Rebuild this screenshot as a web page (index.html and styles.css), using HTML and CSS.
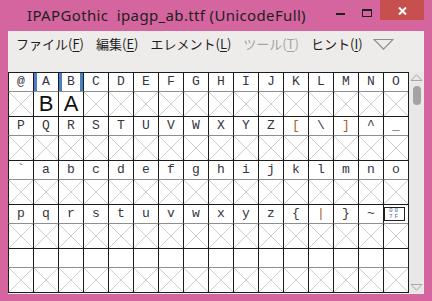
FILE: index.html
```html
<!DOCTYPE html>
<html lang="ja">
<head>
    <meta charset="UTF-8">
    <title>IPAPGothic  ipagp_ab.ttf (UnicodeFull)</title>
    <link rel="stylesheet" href="styles.css">
</head>
<body>
    <div class="window">
        <div class="titlebar">
            <span class="title">IPAPGothic  ipagp_ab.ttf (UnicodeFull)</span>
            <div class="controls">
                <span class="ctl ctl-min"><i class="min-bar"></i></span>
                <span class="ctl ctl-max"><i class="max-box"></i></span>
                <span class="ctl ctl-close">
                    <svg width="9" height="8" viewBox="0 0 9 8"><path d="M1 0.5 L8 7.5 M8 0.5 L1 7.5" stroke="#fff" stroke-width="2"/></svg>
                </span>
            </div>
        </div>

        <div class="client">
            <div class="menubar">
                <span class="menu">ファイル(<u>F</u>)</span>
                <span class="menu">編集(<u>E</u>)</span>
                <span class="menu">エレメント(<u>L</u>)</span>
                <span class="menu disabled">ツール(<u>T</u>)</span>
                <span class="menu">ヒント(<u>I</u>)</span>
                <svg class="menu-more" width="21" height="11" viewBox="0 0 21 11"><path d="M1 0.5 L20 0.5 L10.5 10.2 Z" fill="none" stroke="#8d8d8d" stroke-width="1.2"/></svg>
            </div>

            <div class="sheet">
                <div class="glyph-grid">
                    <!-- row 0x40 -->
                    <div class="label">@</div><div class="label sel-l">A</div><div class="label sel-l sel-r">B</div><div class="label">C</div>
                    <div class="label">D</div><div class="label">E</div><div class="label">F</div><div class="label">G</div>
                    <div class="label">H</div><div class="label">I</div><div class="label">J</div><div class="label">K</div>
                    <div class="label">L</div><div class="label">M</div><div class="label">N</div><div class="label">O</div>
                    <div class="box"></div><div class="box glyph">B</div><div class="box glyph">A</div><div class="box"></div>
                    <div class="box"></div><div class="box"></div><div class="box"></div><div class="box"></div>
                    <div class="box"></div><div class="box"></div><div class="box"></div><div class="box"></div>
                    <div class="box"></div><div class="box"></div><div class="box"></div><div class="box"></div>

                    <!-- row 0x50 -->
                    <div class="label">P</div><div class="label">Q</div><div class="label">R</div><div class="label">S</div>
                    <div class="label">T</div><div class="label">U</div><div class="label">V</div><div class="label">W</div>
                    <div class="label">X</div><div class="label">Y</div><div class="label">Z</div><div class="label warm">[</div>
                    <div class="label">\</div><div class="label warm">]</div><div class="label">^</div><div class="label">_</div>
                    <div class="box"></div><div class="box"></div><div class="box"></div><div class="box"></div>
                    <div class="box"></div><div class="box"></div><div class="box"></div><div class="box"></div>
                    <div class="box"></div><div class="box"></div><div class="box"></div><div class="box"></div>
                    <div class="box"></div><div class="box"></div><div class="box"></div><div class="box"></div>

                    <!-- row 0x60 -->
                    <div class="label">`</div><div class="label">a</div><div class="label">b</div><div class="label">c</div>
                    <div class="label">d</div><div class="label">e</div><div class="label">f</div><div class="label">g</div>
                    <div class="label">h</div><div class="label">i</div><div class="label">j</div><div class="label">k</div>
                    <div class="label">l</div><div class="label">m</div><div class="label">n</div><div class="label">o</div>
                    <div class="box"></div><div class="box"></div><div class="box"></div><div class="box"></div>
                    <div class="box"></div><div class="box"></div><div class="box"></div><div class="box"></div>
                    <div class="box"></div><div class="box"></div><div class="box"></div><div class="box"></div>
                    <div class="box"></div><div class="box"></div><div class="box"></div><div class="box"></div>

                    <!-- row 0x70 -->
                    <div class="label">p</div><div class="label">q</div><div class="label">r</div><div class="label">s</div>
                    <div class="label">t</div><div class="label">u</div><div class="label">v</div><div class="label">w</div>
                    <div class="label">x</div><div class="label">y</div><div class="label">z</div><div class="label">{</div>
                    <div class="label warm">|</div><div class="label">}</div><div class="label">~</div>
                    <div class="label"><span class="hexbox"><span>00</span><span>7F</span></span></div>
                    <div class="box"></div><div class="box"></div><div class="box"></div><div class="box"></div>
                    <div class="box"></div><div class="box"></div><div class="box"></div><div class="box"></div>
                    <div class="box"></div><div class="box"></div><div class="box"></div><div class="box"></div>
                    <div class="box"></div><div class="box"></div><div class="box"></div><div class="box"></div>

                    <!-- row 0x80 -->
                    <div class="label"></div><div class="label"></div><div class="label"></div><div class="label"></div>
                    <div class="label"></div><div class="label"></div><div class="label"></div><div class="label"></div>
                    <div class="label"></div><div class="label"></div><div class="label"></div><div class="label"></div>
                    <div class="label"></div><div class="label"></div><div class="label"></div><div class="label"></div>
                    <div class="box"></div><div class="box"></div><div class="box"></div><div class="box"></div>
                    <div class="box"></div><div class="box"></div><div class="box"></div><div class="box"></div>
                    <div class="box"></div><div class="box"></div><div class="box"></div><div class="box"></div>
                    <div class="box"></div><div class="box"></div><div class="box"></div><div class="box"></div>
                </div>

                <div class="scrollbar">
                    <svg class="arrow" width="13" height="7" viewBox="0 0 13 7"><path d="M1 6.5 L6.5 0.8 L12 6.5 Z" fill="none" stroke="#a8a8a8" stroke-width="1"/></svg>
                    <div class="thumb"></div>
                    <svg class="arrow arrow-down" width="13" height="7" viewBox="0 0 13 7"><path d="M1 0.5 L6.5 6.2 L12 0.5 Z" fill="none" stroke="#a8a8a8" stroke-width="1"/></svg>
                </div>
            </div>
        </div>
    </div>
</body>
</html>
```

FILE: styles.css
```css
:root {
    --frame: #d5659f;
    --close: #c7504f;
    --client: #edeceb;
    --line: #1c1c1c;
    --sub-line: #8e8e8e;
    --cross: #cdcdcd;
    --select: #4a80c2;
    --text: #1e1e1e;
}

html, body {
    margin: 0;
    padding: 0;
}

body {
    width: 432px;
    height: 301px;
    overflow: hidden;
    background: var(--frame);
}

.window {
    width: 432px;
    height: 301px;
    display: flex;
    flex-direction: column;
    background: var(--frame);
}

/* title bar */
.titlebar {
    height: 31px;
    display: flex;
    align-items: flex-start;
    padding-right: 8px;
}

.title {
    white-space: pre;
    font-family: "Noto Sans", "Open Sans", sans-serif;
    font-size: 15px;
    letter-spacing: 0.35px;
    line-height: 31px;
    color: var(--text);
    padding-left: 27px;
}

.controls {
    margin-left: auto;
    display: flex;
}

.ctl {
    height: 20px;
    display: flex;
    align-items: center;
    justify-content: center;
}

.ctl-min {
    width: 27px;
}

.min-bar {
    display: block;
    width: 9px;
    height: 2px;
    margin-top: 7px;
    background: #1e1e1e;
}

.ctl-max {
    width: 26px;
}

.max-box {
    display: block;
    width: 8px;
    height: 5px;
    margin-top: 5px;
    border: 1px solid #1e1e1e;
    border-top-width: 2px;
}

.ctl-close {
    width: 44px;
    background: var(--close);
}

.ctl-close svg {
    margin-top: 2px;
}

/* client area */
.client {
    flex: 1;
    margin: 0 8px 7px 8px;
    background: var(--client);
    display: flex;
    flex-direction: column;
}

.menubar {
    height: 41px;
    display: flex;
    align-items: flex-start;
    padding-left: 2px;
    font-family: "Noto Sans CJK JP", "Noto Sans", sans-serif;
    font-size: 13px;
    color: var(--text);
}

.menu {
    padding: 0 6px;
    line-height: 25px;
}

.menu u {
    text-decoration-thickness: 1px;
    text-underline-offset: 2px;
}

.menu.disabled {
    color: #a3a3a3;
}

.menu-more {
    margin: 8px 0 0 4px;
}

/* glyph table */
.sheet {
    display: flex;
}

.glyph-grid {
    display: grid;
    grid-template-columns: repeat(16, 25px);
    background: #fff;
    border-right: 1px solid var(--line);
    border-bottom: 1px solid var(--line);
}

.label,
.box {
    box-sizing: border-box;
    border-left: 1px solid var(--line);
}

.label {
    height: 19px;
    border-top: 1px solid var(--line);
    font-family: "Liberation Mono", monospace;
    font-size: 13px;
    line-height: 18px;
    text-align: center;
    color: #353542;
    display: flex;
    align-items: center;
    justify-content: center;
}

.label.warm {
    color: #a8641f;
}

.sel-l {
    box-shadow: inset 3px 0 0 var(--select);
}

.sel-l.sel-r {
    box-shadow: inset 3px 0 0 var(--select), inset -3px 0 0 var(--select);
}

.box {
    height: 25px;
    border-top: 1px solid var(--sub-line);
    background:
        linear-gradient(45deg, transparent calc(50% - 0.7px), var(--cross) calc(50% - 0.7px), var(--cross) calc(50% + 0.7px), transparent calc(50% + 0.7px)),
        linear-gradient(-45deg, transparent calc(50% - 0.7px), var(--cross) calc(50% - 0.7px), var(--cross) calc(50% + 0.7px), transparent calc(50% + 0.7px));
}

.box.glyph {
    background: #fff;
    font-family: "Liberation Sans", sans-serif;
    font-size: 22px;
    line-height: 24px;
    text-align: center;
    color: #111;
}

.hexbox {
    box-sizing: border-box;
    width: 21px;
    height: 14px;
    margin-left: -3px;
    border: 1px solid #222;
    display: flex;
    flex-direction: column;
    justify-content: center;
    font-family: "Liberation Mono", monospace;
    font-size: 6px;
    line-height: 6px;
    letter-spacing: 2px;
    color: #4a6a9a;
}

/* scroll bar */
.scrollbar {
    width: 15px;
    height: 221px;
    display: flex;
    flex-direction: column;
    align-items: center;
    background: #e9e8e7;
}

.arrow {
    margin-top: 2px;
}

.thumb {
    width: 8px;
    height: 19px;
    margin-top: 5px;
    border-radius: 4px;
    background: #a3a3a3;
}

.arrow-down {
    margin-top: auto;
    margin-bottom: 2px;
}
```
